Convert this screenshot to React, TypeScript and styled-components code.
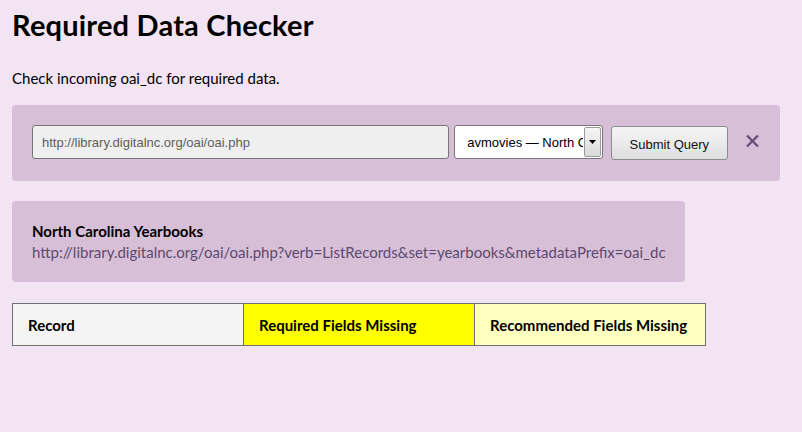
import React from "react";
import styled, { createGlobalStyle } from "styled-components";

const Global = createGlobalStyle`
  html, body { margin: 0; padding: 0; }
  body {
    background: #f2e4f2;
    font-family: Lato, "Open Sans", sans-serif;
    color: #000;
    width: 802px;
    height: 432px;
    overflow: hidden;
  }
`;

const Page = styled.div`
  padding: 8px 12px 0 12px;
  display: flex;
  flex-direction: column;
  align-items: flex-start;
`;

const Title = styled.h1`
  margin: 0;
  font-size: 29px;
  line-height: 34px;
  font-weight: 700;
  letter-spacing: 0.2px;
`;

const Intro = styled.p`
  margin: 27px 0 0 0;
  font-size: 15px;
  line-height: 18px;
`;

const Panel = styled.div<{ $width?: string }>`
  background: #d8bfd8;
  border-radius: 4px;
  box-sizing: border-box;
  width: ${(p) => p.$width ?? "auto"};
`;

const FormPanel = styled(Panel)`
  margin-top: 18px;
  padding: 20px 20px 21px 20px;
  display: flex;
  align-items: flex-start;
  align-self: stretch;
  margin-right: 10px;
`;

const UrlInput = styled.input`
  box-sizing: border-box;
  width: 419px;
  height: 34px;
  border: 1px solid #767676;
  border-radius: 3px;
  background: #efefef;
  font-family: Arial, "Liberation Sans", sans-serif;
  font-size: 13px;
  color: #5e5e5e;
  padding: 0 9px;
  outline: none;
`;

const SelectBox = styled.div`
  box-sizing: border-box;
  margin-left: 5px;
  width: 149px;
  height: 34px;
  border: 1px solid #767676;
  border-radius: 3px;
  background: #fff;
  display: flex;
  align-items: stretch;
  overflow: hidden;
`;

const NativeSelect = styled.select`
  appearance: none;
  -webkit-appearance: none;
  flex: 1;
  min-width: 0;
  border: none;
  background: transparent;
  font-family: Arial, "Liberation Sans", sans-serif;
  font-size: 13px;
  color: #000;
  padding: 0 0 0 12px;
  outline: none;
  overflow: hidden;
  text-overflow: clip;
  white-space: nowrap;
`;

const ArrowBtn = styled.div`
  box-sizing: border-box;
  width: 17px;
  margin: 1px;
  border: 1px solid #9a9a9a;
  border-radius: 2px;
  background: linear-gradient(#f6f6f6, #dadada);
  display: flex;
  align-items: center;
  justify-content: center;
`;

const SubmitButton = styled.button`
  box-sizing: border-box;
  margin-left: 8px;
  margin-top: 1px;
  width: 118px;
  height: 34px;
  border: 1px solid #8c8c8c;
  border-radius: 3px;
  background: linear-gradient(#f4f4f4 0%, #ececec 45%, #dddddd 100%);
  font-family: Arial, "Liberation Sans", sans-serif;
  font-size: 13px;
  color: #111;
  padding: 2px 0 0 0;
  cursor: pointer;
`;

const CloseBtn = styled.button`
  margin-left: 16px;
  margin-top: 8px;
  border: none;
  background: none;
  padding: 0;
  width: 16px;
  height: 16px;
  display: flex;
  align-items: center;
  justify-content: center;
`;

const InfoPanel = styled(Panel)`
  margin-top: 20px;
  padding: 20px 20px 19px 20px;
  width: 673px;
`;

const InfoTitle = styled.div`
  font-size: 15px;
  line-height: 21px;
  font-weight: 700;
`;

const InfoLink = styled.a`
  display: block;
  font-size: 15px;
  line-height: 21px;
  color: #5b4b6f;
  text-decoration: none;
  white-space: nowrap;
`;

const Table = styled.table`
  margin-top: 21px;
  width: 694px;
  border-collapse: collapse;
  border: 1px solid #707070;
`;

const Th = styled.th<{ $bg: string }>`
  background: ${(p) => p.$bg};
  border: 1px solid #707070;
  text-align: left;
  font-size: 15px;
  font-weight: 700;
  height: 42px;
  box-sizing: border-box;
  padding: 1px 15px 0 15px;
  width: 33.33%;
`;

export default function App() {
  return (
    <>
      <Global />
      <Page>
        <Title>Required Data Checker</Title>
        <Intro>Check incoming oai_dc for required data.</Intro>
        <FormPanel>
          <UrlInput readOnly value="http://library.digitalnc.org/oai/oai.php" />
          <SelectBox>
            <NativeSelect defaultValue="avmovies">
              <option value="avmovies">avmovies — North Carolina Moving Images</option>
              <option value="yearbooks">yearbooks — North Carolina Yearbooks</option>
            </NativeSelect>
            <ArrowBtn>
              <svg width="7" height="4" viewBox="0 0 7 4">
                <path d="M0 0H7L3.5 4Z" fill="#000" />
              </svg>
            </ArrowBtn>
          </SelectBox>
          <SubmitButton type="button">Submit Query</SubmitButton>
          <CloseBtn type="button" aria-label="close">
            <svg width="15" height="14" viewBox="0 0 15 14">
              <path d="M2 1.5L13 12.5M13 1.5L2 12.5" stroke="#6b4c7c" strokeWidth="2.4" strokeLinecap="butt" />
            </svg>
          </CloseBtn>
        </FormPanel>
        <InfoPanel>
          <InfoTitle>North Carolina Yearbooks</InfoTitle>
          <InfoLink href="#">
            http://library.digitalnc.org/oai/oai.php?verb=ListRecords&amp;set=yearbooks&amp;metadataPrefix=oai_dc
          </InfoLink>
        </InfoPanel>
        <Table>
          <thead>
            <tr>
              <Th $bg="#f4f4f4">Record</Th>
              <Th $bg="#ffff00">Required Fields Missing</Th>
              <Th $bg="#ffffc0">Recommended Fields Missing</Th>
            </tr>
          </thead>
        </Table>
      </Page>
    </>
  );
}
